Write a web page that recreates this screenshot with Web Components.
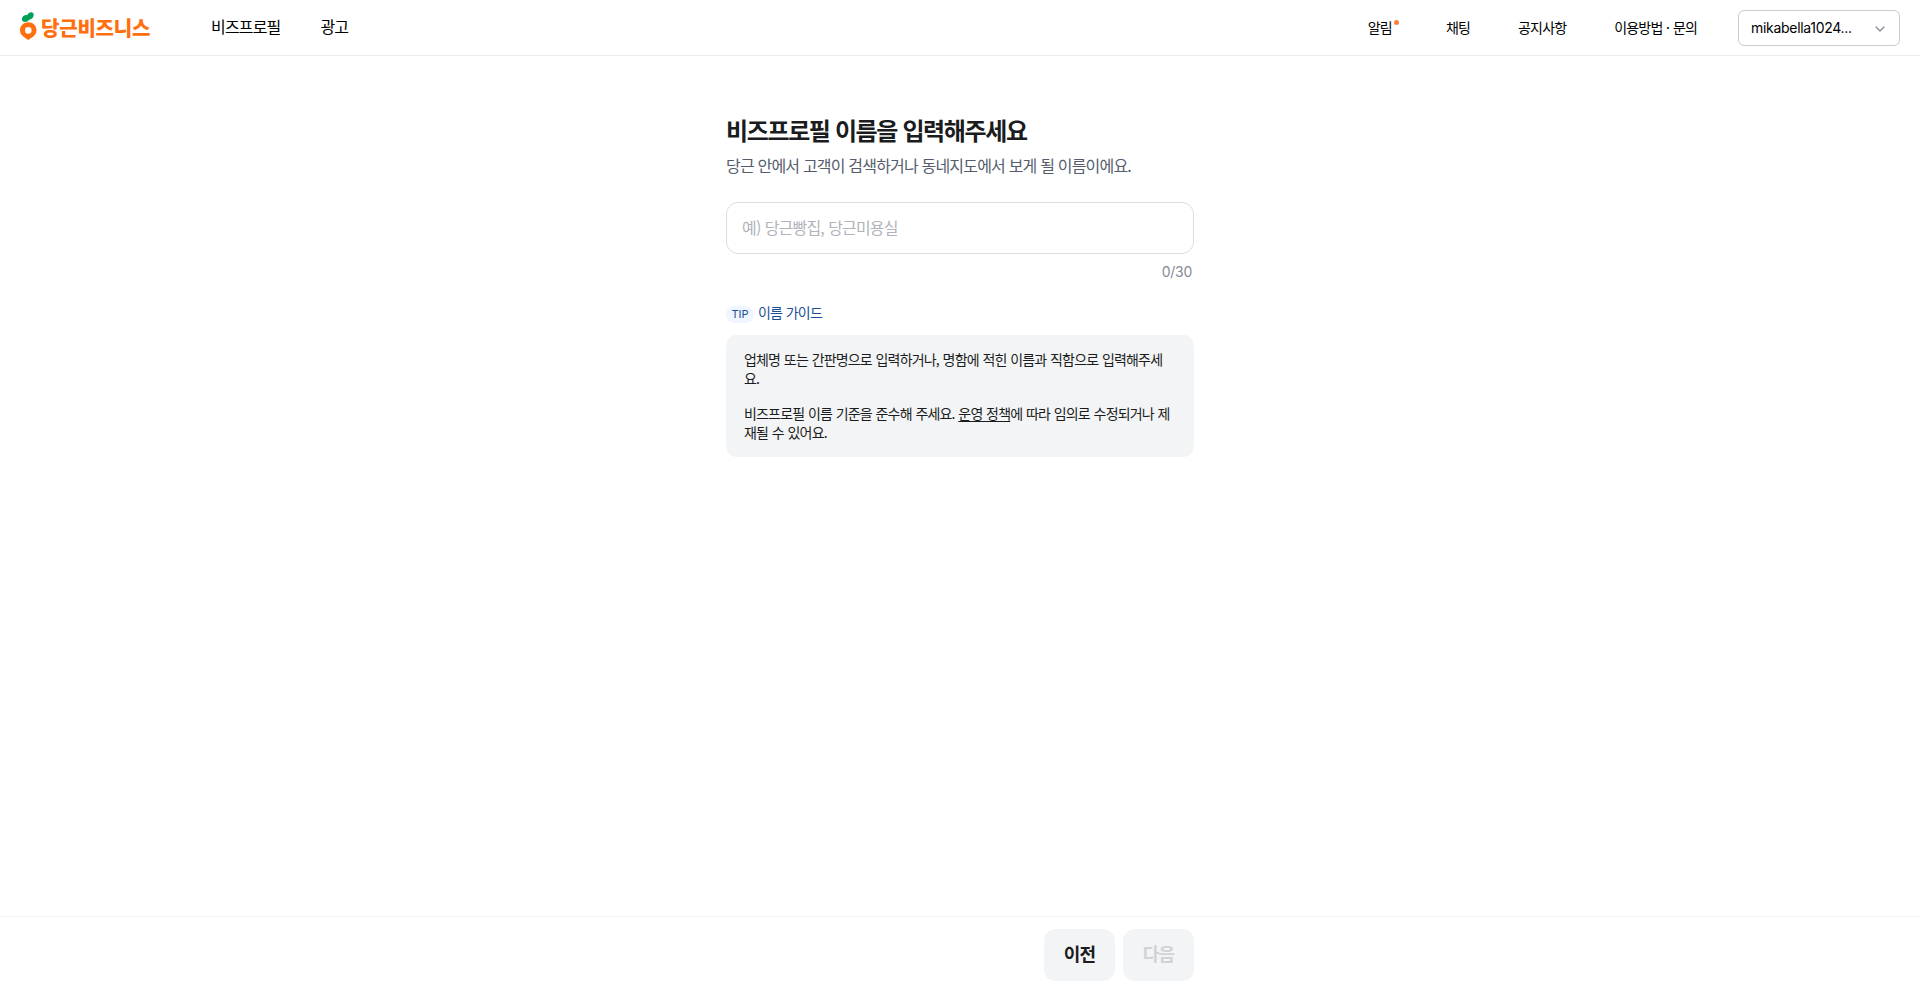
<!DOCTYPE html>
<html lang="ko">
<head>
<meta charset="utf-8">
<title>당근비즈니스</title>
<style>
  :root{
    --fg: #1a1c20;
    --fg-sub: #555d6d;
    --fg-muted: #868b94;
    --fg-disabled: #d1d3d8;
    --line: #dcdee3;
    --fill: #f3f4f5;
    --brand: #ff6f0f;
    --latin: Inter, "Noto Sans CJK KR", sans-serif;
  }
  body{
    margin: 0;
    background: #fff;
    color: var(--fg);
    font-family: "Noto Sans CJK KR", sans-serif;
  }
</style>
</head>
<body>
<biz-page>
  <biz-header slot="header">
    <biz-logo slot="logo">당근비즈니스</biz-logo>
    <biz-nav-link slot="menu">비즈프로필</biz-nav-link>
    <biz-nav-link slot="menu">광고</biz-nav-link>
    <biz-nav-link slot="util" small unread>알림</biz-nav-link>
    <biz-nav-link slot="util" small>채팅</biz-nav-link>
    <biz-nav-link slot="util" small>공지사항</biz-nav-link>
    <biz-nav-link slot="util" small>이용방법 · 문의</biz-nav-link>
    <biz-account slot="util">mikabella1024...</biz-account>
  </biz-header>

  <biz-heading>
    비즈프로필 이름을 입력해주세요
    <span slot="desc">당근 안에서 고객이 검색하거나 동네지도에서 보게 될 이름이에요.</span>
  </biz-heading>
  <biz-text-field placeholder="예) 당근빵집, 당근미용실" max="30"></biz-text-field>
  <biz-tip label="이름 가이드">
    <biz-tip-text>업체명 또는 간판명으로 입력하거나, 명함에 적힌 이름과 직함으로 입력해주세요.</biz-tip-text>
    <biz-tip-text>비즈프로필 이름 기준을 준수해 주세요. <u>운영 정책</u>에 따라 임의로 수정되거나 제재될 수 있어요.</biz-tip-text>
  </biz-tip>

  <biz-footer slot="footer">
    <biz-button>이전</biz-button>
    <biz-button disabled>다음</biz-button>
  </biz-footer>
</biz-page>

<script>
// small helper so every element only declares its template
class BizElement extends HTMLElement{
  constructor(){
    super();
    this.attachShadow({mode:"open"}).innerHTML = this.constructor.html;
  }
}

/* ---------- Page ---------- */
class BizPage extends BizElement{
  static html = `
    <style>
      :host{
        display: flex;
        flex-direction: column;
        height: 100vh;
        letter-spacing: -.83px;
        word-spacing: .6px;
      }
      main{
        flex: 1;
        box-sizing: border-box;
        width: 468px;
        margin: 0 auto;
        padding-top: 58px;
      }
    </style>
    <slot name="header"></slot>
    <main><slot></slot></main>
    <slot name="footer"></slot>
  `;
}

/* ---------- Header ---------- */
class BizHeader extends BizElement{
  static html = `
    <style>
      :host{
        display: flex;
        align-items: center;
        box-sizing: border-box;
        height: 56px;
        padding: 0 20px;
        border-bottom: 1px solid #eaebee;
      }
      nav{ display: flex; align-items: center; }
      .menu{ gap: 40px; margin-left: 61px; }
      .util{ gap: 48px; margin-left: auto; }
      ::slotted(biz-account){ margin-left: -7px; }
    </style>
    <slot name="logo"></slot>
    <nav class="menu"><slot name="menu"></slot></nav>
    <nav class="util"><slot name="util"></slot></nav>
  `;
}

class BizLogo extends BizElement{
  static html = `
    <style>
      :host{
        display: flex;
        align-items: center;
        width: 130px;
        color: var(--brand);
        font-size: 20px;
        font-weight: 900;
        line-height: 28px;
        letter-spacing: -.2px;
        white-space: nowrap;
      }
      svg{ flex: none; margin: 0 4px 3px 0; }
    </style>
    <svg width="17" height="28" viewBox="0 0 17 28">
      <path fill="#00a05b" d="M2.1 8.3C1.4 6.3 2.7 4 5 3.3c.8-.3 1.6-.3 2.2-.1C7.700 1.700 9 .5 10.600.2c1.900-.4 3.200.9 3.100 2.700-.1 2.500-2.100 4.700-4.500 4.800C8 9.400 5.500 10.300 3.700 9.800 2.900 9.600 2.300 9 2.100 8.300Z"/>
      <path fill="#ff6f0f" fill-rule="evenodd" d="M8.300 10.300C3.600 10.300 0 13.600 0 18.200c0 4.900 4.400 7.200 8.300 9.700 3.900-2.500 8.200-4.800 8.200-9.700 0-4.600-3.500-7.900-8.200-7.900Zm0 4.800a3.300 3.300 0 1 1 0 6.600 3.300 3.300 0 0 1 0-6.600Z"/>
    </svg>
    <slot></slot>
  `;
}

class BizNavLink extends BizElement{
  static html = `
    <style>
      :host{
        position: relative;
        display: block;
        padding-bottom: 3px;
        color: #000;
        font-size: 16px;
        line-height: 24px;
        white-space: nowrap;
      }
      :host([small]){ padding-bottom: 2px; font-size: 14px; }
      :host([unread]){ margin-right: 6px; }
      i{ display: none; }
      :host([unread]) i{
        display: block;
        position: absolute;
        top: 5px;
        right: -7px;
        width: 5px;
        height: 5px;
        border-radius: 50%;
        background: #ff7e36;
      }
    </style>
    <slot></slot><i></i>
  `;
}

class BizAccount extends BizElement{
  static html = `
    <style>
      :host{
        display: flex;
        align-items: center;
        justify-content: space-between;
        box-sizing: border-box;
        width: 162px;
        height: 36px;
        padding: 0 14px 0 12px;
        border: 1px solid #cbccd2;
        border-radius: 6px;
        color: #000;
        font: 14px var(--latin);
        letter-spacing: -.3px;
      }
      svg{ margin-top: 2px; }
    </style>
    <slot></slot>
    <svg width="10" height="6" viewBox="0 0 10 6" fill="none" stroke="#868b94" stroke-width="1.300" stroke-linecap="round" stroke-linejoin="round">
      <path d="M1 1l4 4 4-4"/>
    </svg>
  `;
}

/* ---------- Form ---------- */
class BizHeading extends BizElement{
  static html = `
    <style>
      :host{ display: block; word-spacing: 0; }
      h1{ margin: 0; font-size: 24px; font-weight: 700; line-height: 32px; letter-spacing: -1.37px; }
      p{ margin: 8px 0 0; color: var(--fg-sub); font-size: 16px; line-height: 22px; word-spacing: .1px; }
    </style>
    <h1><slot></slot></h1>
    <p><slot name="desc"></slot></p>
  `;
}

class BizTextField extends BizElement{
  static html = `
    <style>
      :host{ display: block; margin-top: 26px; }
      input{
        display: block;
        box-sizing: border-box;
        width: 100%;
        height: 52px;
        padding: 0 15px 3px;
        border: 1px solid var(--line);
        border-radius: 12px;
        outline: 0;
        background: #fff;
        color: var(--fg);
        font: inherit;
        font-size: 16px;
        letter-spacing: inherit;
        word-spacing: inherit;
      }
      input::placeholder{ color: #b0b3ba; }
      .count{
        margin: 8px 2px 0;
        color: var(--fg-muted);
        font: 14px/19px var(--latin);
        letter-spacing: -.25px;
        text-align: right;
      }
    </style>
    <input type="text">
    <div class="count"></div>
  `;
  connectedCallback(){
    const input = this.shadowRoot.querySelector("input");
    const count = this.shadowRoot.querySelector(".count");
    const max = this.getAttribute("max");
    const update = () => { count.textContent = `${input.value.length}/${max}`; };
    input.placeholder = this.getAttribute("placeholder");
    input.maxLength = max;
    input.addEventListener("input", update);
    update();
  }
}

class BizTip extends BizElement{
  static html = `
    <style>
      :host{ display: block; margin-top: 21px; }
      .head{
        display: flex;
        align-items: center;
        gap: 4px;
        height: 20px;
        color: #1c4e98;
        font-size: 14px;
        line-height: 20px;
      }
      .badge{
        box-sizing: border-box;
        width: 28px;
        height: 17px;
        margin-top: 4px;
        border-radius: 9px;
        background: #eff6ff;
        font: 400 11px/16px var(--latin);
        letter-spacing: 0;
        text-align: center;
      }
      .body{
        display: grid;
        gap: 16px;
        margin-top: 13px;
        padding: 15px 18px;
        border-radius: 10px;
        background: var(--fill);
      }
    </style>
    <div class="head"><span class="badge">TIP</span><span class="label"></span></div>
    <div class="body"><slot></slot></div>
  `;
  connectedCallback(){
    this.shadowRoot.querySelector(".label").textContent = this.getAttribute("label");
  }
}

class BizTipText extends BizElement{
  static html = `
    <style>
      :host{ display: block; font-size: 14px; line-height: 19px; word-break: break-all; }
      ::slotted(u){ text-underline-offset: 2px; }
    </style>
    <slot></slot>
  `;
}

/* ---------- Footer ---------- */
class BizFooter extends BizElement{
  static html = `
    <style>
      :host{ display: block; border-top: 1px solid #f3f4f5; }
      .inner{
        display: flex;
        justify-content: flex-end;
        gap: 8px;
        width: 468px;
        margin: 0 auto;
        padding: 12px 0;
      }
    </style>
    <div class="inner"><slot></slot></div>
  `;
}

class BizButton extends BizElement{
  static html = `
    <style>
      :host{ display: block; }
      button{
        width: 71px;
        height: 52px;
        padding: 0 0 4px;
        border: 0;
        border-radius: 12px;
        background: var(--fill);
        color: var(--fg);
        font: inherit;
        font-size: 18px;
        font-weight: 700;
        letter-spacing: inherit;
      }
      :host([disabled]) button{ color: var(--fg-disabled); }
    </style>
    <button type="button"><slot></slot></button>
  `;
  connectedCallback(){
    this.shadowRoot.querySelector("button").disabled = this.hasAttribute("disabled");
  }
}

customElements.define("biz-page", BizPage);
customElements.define("biz-header", BizHeader);
customElements.define("biz-logo", BizLogo);
customElements.define("biz-nav-link", BizNavLink);
customElements.define("biz-account", BizAccount);
customElements.define("biz-heading", BizHeading);
customElements.define("biz-text-field", BizTextField);
customElements.define("biz-tip", BizTip);
customElements.define("biz-tip-text", BizTipText);
customElements.define("biz-footer", BizFooter);
customElements.define("biz-button", BizButton);
</script>
</body>
</html>
